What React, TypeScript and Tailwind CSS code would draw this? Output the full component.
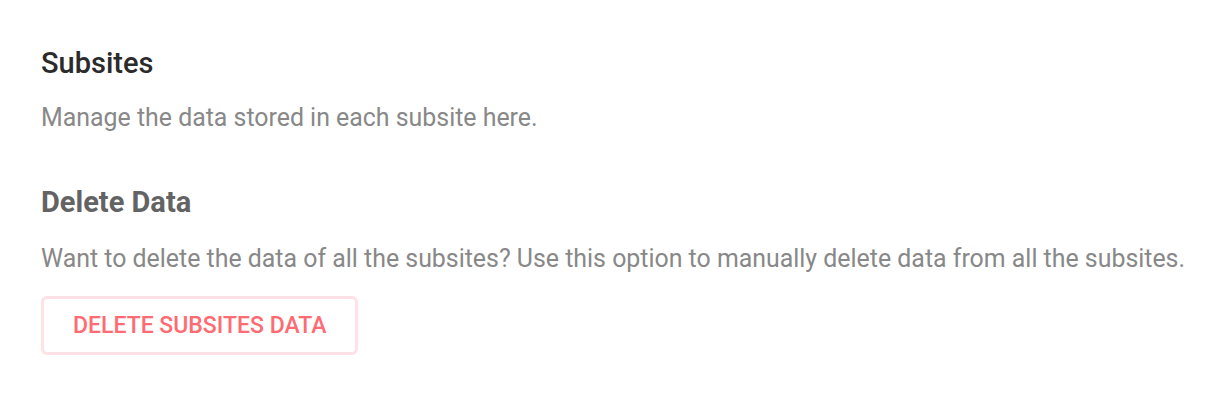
export default function App() {
  return (
    <div className="min-h-screen bg-white" style={{ fontFamily: "Roboto, 'Liberation Sans', sans-serif" }}>
      <div className="pl-[41px] pr-[20px] pt-[45px]">
        <h2 className="text-[29px] leading-[36px] font-medium text-[#2b2b2b]">Subsites</h2>
        <p className="mt-[21px] text-[24.9px] leading-[32px] text-[#888888]">Manage the data stored in each subsite here.</p>

        <h3 className="mt-[50px] text-[29px] leading-[36px] font-bold text-[#636363]">Delete Data</h3>
        <p className="mt-[23px] text-[24.9px] leading-[32px] text-[#888888]">
          Want to delete the data of all the subsites? Use this option to manually delete data from all the subsites.
        </p>
        <button className="mt-[21px] h-[59px] px-[29px] rounded-[6px] border-[3px] border-[#ffe1e6] bg-white text-[23px] leading-none font-medium uppercase text-[#ff6b72]">
          Delete Subsites Data
        </button>
      </div>
    </div>
  );
}
